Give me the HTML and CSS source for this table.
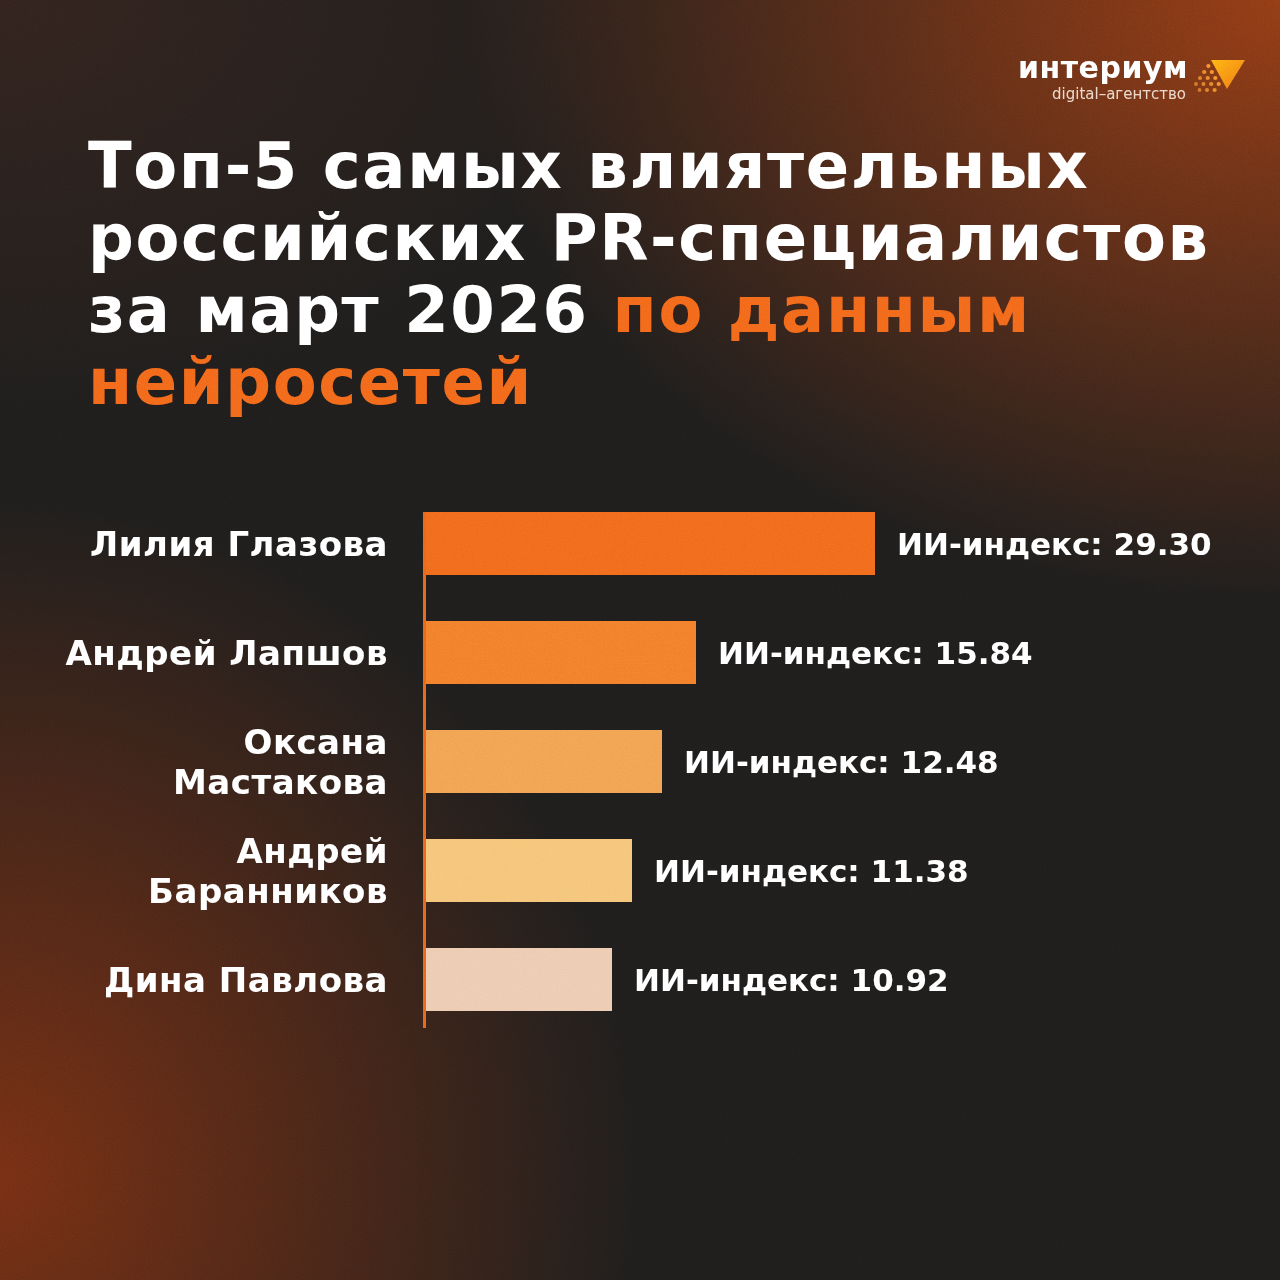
FILE: index.html
```html
<!DOCTYPE html>
<html lang="ru">
<head>
<meta charset="utf-8">
<title>Топ-5 PR-специалистов</title>
<link rel="stylesheet" href="styles.css">
</head>
<body>
<div class="page">
  <header class="header">
    <div class="logo">
      <div class="logo-text">
        <div class="logo-name">интериум</div>
        <div class="logo-sub">digital–агентство</div>
      </div>
      <svg class="logo-icon" viewBox="0 0 58 42" width="58" height="42">
        <defs>
          <linearGradient id="tri" x1="0" y1="0" x2="1" y2="1">
            <stop offset="0" stop-color="#ffb412"/>
            <stop offset="1" stop-color="#f07414"/>
          </linearGradient>
        </defs>
        <polygon points="21,4 55,4 37,33" fill="url(#tri)"/>
        <g fill="#f5922c">
          <circle cx="18.4" cy="10" r="2.1"/>
          <circle cx="21.9" cy="16" r="2.1"/>
          <circle cx="25.3" cy="22" r="2.1"/>
          <circle cx="28.7" cy="28" r="2.1"/>
          <circle cx="14.2" cy="16" r="2.1" opacity="0.9"/>
          <circle cx="17.7" cy="22" r="2.1" opacity="0.9"/>
          <circle cx="21.2" cy="28" r="2.1" opacity="0.9"/>
          <circle cx="24.6" cy="34" r="2.1" opacity="0.9"/>
          <circle cx="10" cy="22" r="2" opacity="0.8"/>
          <circle cx="13.5" cy="28" r="2" opacity="0.8"/>
          <circle cx="17" cy="34" r="2" opacity="0.8"/>
          <circle cx="6" cy="28" r="1.9" opacity="0.7"/>
          <circle cx="9.5" cy="34" r="1.9" opacity="0.7"/>
        </g>
      </svg>
    </div>
  </header>

  <h1 class="title">Топ-5 самых влиятельных<br>российских PR-специалистов<br>за март 2026 <span class="accent">по данным<br>нейросетей</span></h1>

  <section class="chart">
    <div class="names">
      <div class="name">Лилия Глазова</div>
      <div class="name">Андрей Лапшов</div>
      <div class="name">Оксана<br>Мастакова</div>
      <div class="name">Андрей<br>Баранников</div>
      <div class="name">Дина Павлова</div>
    </div>
    <div class="bars">
      <div class="row"><div class="bar bar-1" style="width:449px"></div><div class="value">ИИ-индекс: 29.30</div></div>
      <div class="row"><div class="bar bar-2" style="width:270px"></div><div class="value">ИИ-индекс: 15.84</div></div>
      <div class="row"><div class="bar bar-3" style="width:236px"></div><div class="value">ИИ-индекс: 12.48</div></div>
      <div class="row"><div class="bar bar-4" style="width:206px"></div><div class="value">ИИ-индекс: 11.38</div></div>
      <div class="row"><div class="bar bar-5" style="width:186px"></div><div class="value">ИИ-индекс: 10.92</div></div>
    </div>
  </section>

  <svg class="grain" width="1280" height="1280">
    <filter id="noise">
      <feTurbulence type="fractalNoise" baseFrequency="0.9" numOctaves="2" stitchTiles="stitch"/>
      <feColorMatrix type="saturate" values="0"/>
    </filter>
    <rect width="100%" height="100%" filter="url(#noise)"/>
  </svg>
</div>
</body>
</html>
```
FILE: styles.css
```css
html, body {
  margin: 0;
  padding: 0;
  background: #1e1d1c;
}

.page {
  position: relative;
  width: 1280px;
  height: 1280px;
  overflow: hidden;
  box-sizing: border-box;
  padding: 0 32px 0 88px;
  font-family: "DejaVu Sans", "Liberation Sans", sans-serif;
  color: #ffffff;
  background:
    radial-gradient(ellipse 820px 600px at 100% 0%, rgba(150, 60, 20, 0.95), rgba(150, 60, 20, 0) 100%),
    radial-gradient(ellipse 640px 680px at 0% 92%, rgba(125, 48, 18, 0.9), rgba(125, 48, 18, 0) 100%),
    radial-gradient(ellipse 640px 420px at 0% 0%, rgba(70, 40, 30, 0.5), rgba(70, 40, 30, 0) 100%),
    #1e1d1c;
}

.header {
  display: flex;
  justify-content: flex-end;
  padding-top: 50px;
}

.logo {
  display: flex;
  align-items: center;
  gap: 2px;
}

.logo-text {
  display: flex;
  flex-direction: column;
  align-items: flex-end;
}

.logo-name {
  font-size: 30px;
  font-weight: bold;
  letter-spacing: 0.5px;
  line-height: 35px;
}

.logo-sub {
  font-size: 15px;
  line-height: 18px;
  color: #ecd6c8;
  margin-right: 2px;
}

.logo-icon {
  display: block;
}

.title {
  margin: 27px 0 0 0;
  font-size: 64px;
  line-height: 72px;
  font-weight: bold;
  letter-spacing: 1.6px;
  color: #ffffff;
}

.accent {
  color: #f2661a;
}

.chart {
  display: flex;
  gap: 35px;
  margin-top: 94px;
}

.names {
  width: 300px;
  display: flex;
  flex-direction: column;
  gap: 46px;
}

.name {
  height: 63px;
  display: flex;
  align-items: center;
  justify-content: flex-end;
  text-align: right;
  white-space: nowrap;
  font-size: 34px;
  line-height: 40px;
  font-weight: bold;
  letter-spacing: 0.5px;
}

.bars {
  display: flex;
  flex-direction: column;
  gap: 46px;
  border-left: 3px solid #e8651a;
  padding-bottom: 17px;
}

.row {
  height: 63px;
  display: flex;
  align-items: center;
  gap: 22px;
}

.bar {
  height: 63px;
}

.bar-1 { background: #f1681c; }
.bar-2 { background: #f27c2a; }
.bar-3 { background: #f1a150; }
.bar-4 { background: #f5c477; }
.bar-5 { background: #edcab0; }

.value {
  font-size: 31px;
  font-weight: bold;
  white-space: nowrap;
}

.grain {
  position: absolute;
  left: 0;
  top: 0;
  pointer-events: none;
  opacity: 0.28;
  mix-blend-mode: overlay;
}
```
